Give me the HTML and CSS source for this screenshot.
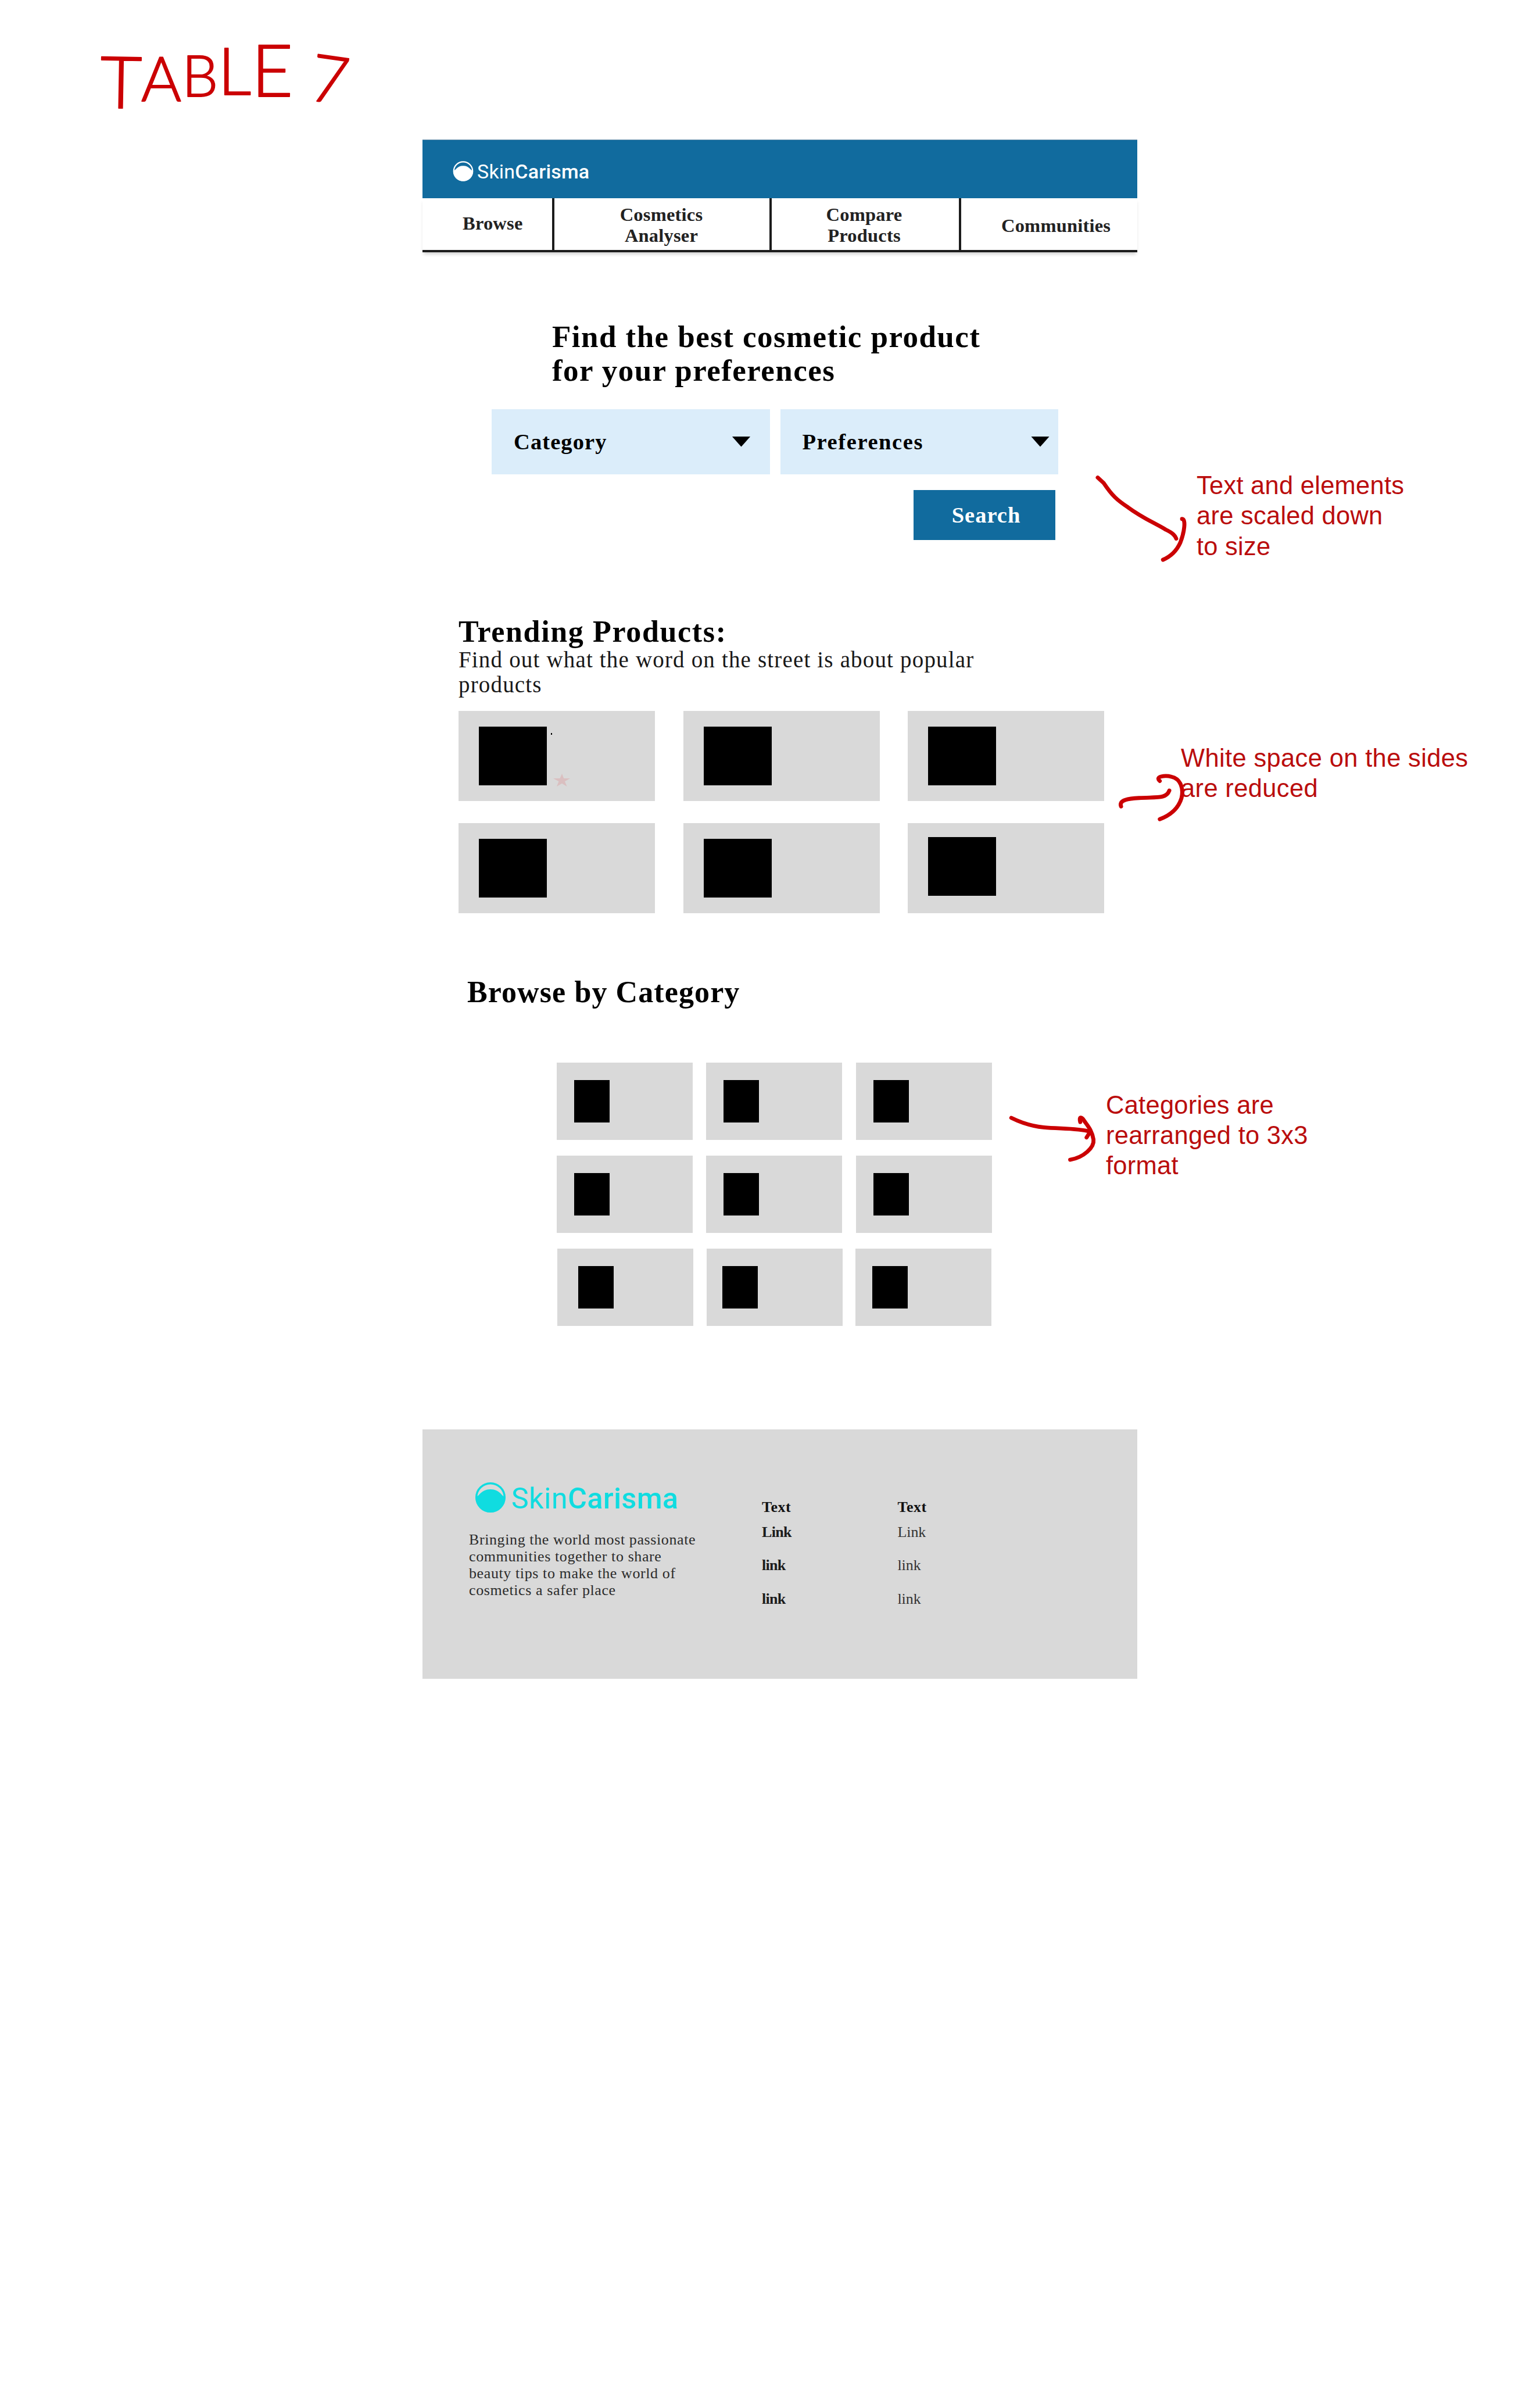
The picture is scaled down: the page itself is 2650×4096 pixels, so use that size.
FILE: index.html
```html
<!DOCTYPE html>
<html lang="en">
<head>
<meta charset="utf-8">
<title>SkinCarisma tablet wireframe</title>
<link rel="stylesheet" href="styles.css">
</head>
<body>
<main class="tablet">
  <header class="topbar">
    <div class="logo">
      <svg class="logo-mark" viewBox="0 0 54 52"><circle class="ring" cx="27" cy="26" r="24.3"/><path class="ball" d="M1.5 24C6 28 9 12 27 12S48 28 52.500 24C53 40 42 51.500 27 51.500S1 40 1.500 24Z"/></svg>
      <span class="logo-text">Skin<b>Carisma</b></span>
    </div>
  </header>
  <nav class="nav">
    <a class="nav-item browse">Browse</a>
    <a class="nav-item">Cosmetics<br>Analyser</a>
    <a class="nav-item compare">Compare<br>Products</a>
    <a class="nav-item communities">Communities</a>
  </nav>

  <section class="hero">
    <h1 class="hero-title">Find the best cosmetic product<br>for your preferences</h1>
    <div class="filters">
      <div class="select"><span>Category</span><i class="caret"></i></div>
      <div class="select last"><span>Preferences</span><i class="caret"></i></div>
    </div>
    <button class="search">Search</button>
  </section>

  <section class="trending">
    <h2 class="title title-trending">Trending Products:</h2>
    <p class="subtitle">Find out what the word on the street is about popular<br>products</p>
    <div class="products">
      <div class="product"><div class="thumb"></div><i class="dot"></i><svg class="star" viewBox="0 0 29 22"><path d="M15 0L18.200 8H29L20 13.300L23.500 22L15 16.800L6 22L9.500 13.300L0 8H11.500Z"/></svg></div>
      <div class="product"><div class="thumb"></div></div>
      <div class="product"><div class="thumb"></div></div>
      <div class="product"><div class="thumb"></div></div>
      <div class="product"><div class="thumb"></div></div>
      <div class="product raised"><div class="thumb"></div></div>
    </div>
  </section>

  <section class="browse-by">
    <h2 class="title">Browse by Category</h2>
    <div class="categories">
      <div class="category"><div class="tile"></div></div>
      <div class="category"><div class="tile"></div></div>
      <div class="category"><div class="tile"></div></div>
      <div class="category"><div class="tile"></div></div>
      <div class="category"><div class="tile"></div></div>
      <div class="category"><div class="tile"></div></div>
      <div class="category seventh"><div class="tile"></div></div>
      <div class="category eighth"><div class="tile"></div></div>
      <div class="category ninth"><div class="tile"></div></div>
    </div>
  </section>

  <footer class="footer">
    <div class="about">
      <div class="logo logo-large">
        <svg class="logo-mark" viewBox="0 0 54 52"><circle class="ring" cx="27" cy="26" r="24.300"/><path class="ball" d="M1.500 24C6 28 9 12 27 12S48 28 52.500 24C53 40 42 51.500 27 51.500S1 40 1.500 24Z"/></svg>
        <span class="logo-text">Skin<b>Carisma</b></span>
      </div>
      <p class="blurb">Bringing the world most passionate<br>communities together to share<br>beauty tips to make the world of<br>cosmetics a safer place</p>
    </div>
    <div class="links strong"><b>Text</b><a>Link</a><a>link</a><a>link</a></div>
    <div class="links"><b>Text</b><a>Link</a><a>link</a><a>link</a></div>
  </footer>
</main>

<p class="note note-scale">Text and elements<br>are scaled down<br>to size</p>
<p class="note note-space">White space on the sides<br>are reduced</p>
<p class="note note-grid">Categories are<br>rearranged to 3x3<br>format</p>

<!-- pen layer: label and arrows -->
<svg class="ink" viewBox="0 0 2904 4488">
  <text class="scrawl" x="188 266 343 411 474 580" y="203 190 182 178 182 188" rotate="1 0 0 0 0 8"><tspan class="size-xl">T</tspan><tspan class="size-m">A</tspan><tspan class="size-s">B</tspan><tspan class="size-l">L</tspan><tspan class="size-xl">E</tspan><tspan class="size-l">7</tspan></text>
  <g class="pen">
    <path d="M2070 900L2081 910C2097 934 2107 943 2127 956C2154 976 2180 987 2198 998C2213 1005 2216 1010 2218 1015"/>
    <path d="M2229 978C2237 978 2233 1004 2226 1022C2219 1038 2207 1049 2193 1055"/>
    <path d="M2114 1520C2109 1507 2130 1505 2148 1504C2182 1502 2199 1506 2205 1490"/>
    <path d="M2187 1472C2177 1463 2198 1461 2209 1464C2227 1468 2232 1487 2228 1504C2222 1524 2206 1537 2187 1544"/>
    <path d="M1907 2107C1931 2119 1949 2123 1968 2125C1998 2128 2030 2126 2056 2133L2049 2144"/>
    <path d="M2037 2115C2034 2104 2040 2105 2044 2112C2051 2122 2059 2130 2062 2148C2064 2163 2043 2182 2018 2186"/>
  </g>
</svg>
</body>
</html>
```
FILE: styles.css
```css
* { box-sizing: border-box; margin: 0; padding: 0; }
body {
  position: relative;
  width: 2650px;
  height: 4096px;
  overflow: hidden;
  background: #fff;
  color: #000;
  font-family: "Liberation Serif", "Times New Roman", serif;
}
.tablet { width: 1230px; margin-left: 727px; padding-top: 240px; }

/* header */
.topbar {
  display: flex;
  height: 101px;
  padding: 36px 0 0 52px;
  background: #116b9e;
  border-top: 1px solid #6f93ad;
}
.logo { display: flex; align-items: flex-start; gap: 6px; color: #fff; }
.logo-mark { width: 36px; height: 35px; flex: none; }
.ring { fill: none; stroke: currentColor; stroke-width: 3.4; }
.ball { fill: currentColor; }
.logo-text {
  font: 400 34px/37px Roboto, sans-serif;
  white-space: nowrap;
  letter-spacing: .2px;
}
.logo-text b { font-weight: 500; }
.nav {
  display: grid;
  grid-template-columns: 227px 374px 326px 303px;
  height: 93px;
  border-bottom: 4px solid #1c1c1c;
  box-shadow: 0 5px 6px -2px #0003;
}
.nav-item {
  display: flex;
  align-items: center;
  justify-content: center;
  padding: 2px 2px 0 0;
  border-right: 4px solid #1c1c1c;
  font: bold 32.500px/36px "Liberation Serif", serif;
  letter-spacing: .2px;
  text-align: center;
  color: #222;
}
.nav-item.browse { justify-content: flex-start; padding: 0 0 3px 69px; }
.nav-item.compare { padding-right: 4px; }
.nav-item.communities { justify-content: flex-start; padding: 4px 0 0 69px; border-right: 0; }

/* hero */
.hero { display: flex; flex-direction: column; padding: 117px 0 0 119px; }
.hero-title {
  padding-left: 104px;
  font-size: 53px;
  line-height: 57.800px;
  letter-spacing: 1.450px;
}
.filters { display: flex; gap: 18px; margin-top: 37px; }
.select {
  display: flex;
  align-items: center;
  justify-content: space-between;
  width: 478.500px;
  height: 112px;
  padding: 0 33px 0 38px;
  background: #dbedfa;
  font: bold 38.500px/44px "Liberation Serif", serif;
  letter-spacing: 1.100px;
}
.select.last { padding-right: 15px; letter-spacing: 1.600px; }
.caret {
  width: 32px;
  height: 18px;
  background: #000;
  clip-path: polygon(0 0, 100% 0, 50% 100%);
}
.search {
  width: 244px;
  height: 86px;
  margin: 27px 0 0 726px;
  padding-left: 6px;
  border: 0;
  background: #116b9e;
  color: #fff;
  font: bold 38.500px/44px "Liberation Serif", serif;
  letter-spacing: 1px;
}

/* trending */
.title { font-size: 52px; line-height: 50px; letter-spacing: 1.100px; }
.title-trending { letter-spacing: 1.650px; }
.trending { padding: 133px 0 0 62px; }
.subtitle {
  padding-top: 1px;
  color: #181818;
  font-size: 39px;
  line-height: 43.800px;
  letter-spacing: 1.170px;
  white-space: nowrap;
}
.products {
  display: grid;
  grid-template-columns: repeat(3, 338px);
  grid-auto-rows: 155px;
  gap: 38px 48.500px;
  margin-top: 22.700px;
}
.product { position: relative; padding: 27px 0 0 35px; background: #d9d9d9; }
.product.raised { padding-top: 24px; }
.thumb { width: 117px; height: 101px; background: #000; }
.dot { position: absolute; left: 159px; top: 38px; width: 2px; height: 3px; background: #000; }
.star { position: absolute; left: 163px; top: 108px; width: 29px; height: 22px; fill: #dabfc0; }

/* categories */
.browse-by { padding: 110.800px 0 0 77px; }
.categories {
  display: grid;
  grid-template-columns: repeat(3, 234px);
  grid-auto-rows: 132.500px;
  gap: 27.500px 23.500px;
  margin: 96.500px 0 0 153.500px;
}
.category { padding: 30px 0 0 30px; background: #d9d9d9; }
.tile { width: 61px; height: 73px; background: #000; }
.seventh { margin: 0 -1px 0 1px; padding-left: 36px; }
.eighth { margin: 0 -1px 0 1px; padding-left: 27px; }
.ninth { margin: 0 1px 0 -1px; padding-left: 29px; }

/* footer */
.footer {
  display: grid;
  grid-template-columns: 503px 233.500px 1fr;
  height: 429px;
  margin-top: 178.500px;
  padding-left: 80px;
  background: #d9d9d9;
}
.about { padding-top: 91px; }
.logo-large { gap: 9px; padding-left: 10px; color: #10dce0; }
.logo-large .logo-mark { width: 54px; height: 52px; }
.logo-large .logo-text { font-size: 50px; line-height: 57px; letter-spacing: .6px; }
.blurb {
  margin-top: 26.500px;
  color: #2c2c2c;
  font-size: 26px;
  line-height: 29px;
  letter-spacing: .6px;
  white-space: nowrap;
}
.links { display: flex; flex-direction: column; margin-left: 1px; padding-top: 119px; font-size: 26px; line-height: 30px; color: #333; }
.links b { margin-bottom: 12.500px; color: #111; letter-spacing: .5px; }
.links a { margin-bottom: 27.500px; letter-spacing: -.1px; }
.links.strong a { font-weight: bold; color: #1c1c1c; letter-spacing: -.7px; }

/* annotations */
.note {
  position: absolute;
  font: 43.500px/52.300px "Liberation Sans", Arial, sans-serif;
  letter-spacing: .25px;
  color: #ba0d0d;
  white-space: nowrap;
}
.note-scale { left: 2059px; top: 809px; }
.note-space { left: 2032px; top: 1278px; letter-spacing: .35px; }
.note-grid { left: 1903px; top: 1874.500px; }
.ink { position: absolute; left: 0; top: 0; width: 2650px; height: 4096px; pointer-events: none; }
.pen { fill: none; stroke: #cb0003; stroke-width: 7.500; stroke-linecap: round; stroke-linejoin: round; }
.scrawl { font: 300 126px Lato, sans-serif; fill: #cb0003; stroke: #cb0003; stroke-width: 2; stroke-linejoin: round; }
.size-s { font-size: 108px; }
.size-m { font-size: 116px; }
.size-l { font-size: 124px; }
.size-xl { font-size: 136px; }
```
